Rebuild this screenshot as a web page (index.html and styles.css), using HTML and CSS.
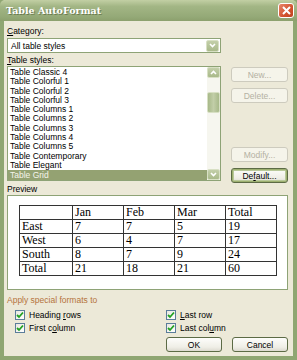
FILE: index.html
```html
<!DOCTYPE html>
<html lang="en">

<head>
    <meta charset="UTF-8">
    <title>Table AutoFormat</title>
    <link rel="stylesheet" href="styles.css">
</head>

<body>
    <div class="window">
        <div class="titlebar">
            <span class="title">Table AutoFormat</span>
            <span class="close">
                <svg width="11" height="11" viewBox="0 0 11 11"><path d="M2 2 L9 9 M9 2 L2 9" stroke="#fff" stroke-width="2"/></svg>
            </span>
        </div>

        <div class="client">
            <div class="label"><u>C</u>ategory:</div>
            <div class="combo">
                <span class="combo-text">All table styles</span>
                <span class="arrow-btn">
                    <svg width="7" height="5" viewBox="0 0 7 5"><path d="M1 1 L3.5 3.5 L6 1" stroke="#fff" stroke-width="1.6" fill="none"/></svg>
                </span>
            </div>

            <div class="label"><u>T</u>able styles:</div>
            <div class="styles-row">
                <div class="listbox">
                    <ul class="items">
                        <li>Table Classic 4</li>
                        <li>Table Colorful 1</li>
                        <li>Table Colorful 2</li>
                        <li>Table Colorful 3</li>
                        <li>Table Columns 1</li>
                        <li>Table Columns 2</li>
                        <li>Table Columns 3</li>
                        <li>Table Columns 4</li>
                        <li>Table Columns 5</li>
                        <li>Table Contemporary</li>
                        <li>Table Elegant</li>
                        <li class="selected">Table Grid</li>
                    </ul>
                    <div class="scrollbar">
                        <span class="arrow-btn small">
                            <svg width="7" height="5" viewBox="0 0 7 5"><path d="M1 4 L3.5 1.5 L6 4" stroke="#fff" stroke-width="1.6" fill="none"/></svg>
                        </span>
                        <div class="track">
                            <div class="thumb"></div>
                        </div>
                        <span class="arrow-btn small">
                            <svg width="7" height="5" viewBox="0 0 7 5"><path d="M1 1 L3.5 3.5 L6 1" stroke="#fff" stroke-width="1.6" fill="none"/></svg>
                        </span>
                    </div>
                </div>
                <div class="side-buttons">
                    <button class="btn disabled">New...</button>
                    <button class="btn disabled">Delete...</button>
                    <div class="spacer"></div>
                    <button class="btn disabled">Modify...</button>
                    <button class="btn default">De<u>f</u>ault...</button>
                </div>
            </div>

            <div class="label">Preview</div>
            <div class="preview">
                <table class="grid">
                    <tr><td></td><td>Jan</td><td>Feb</td><td>Mar</td><td>Total</td></tr>
                    <tr><td>East</td><td>7</td><td>7</td><td>5</td><td>19</td></tr>
                    <tr><td>West</td><td>6</td><td>4</td><td>7</td><td>17</td></tr>
                    <tr><td>South</td><td>8</td><td>7</td><td>9</td><td>24</td></tr>
                    <tr><td>Total</td><td>21</td><td>18</td><td>21</td><td>60</td></tr>
                </table>
            </div>

            <div class="group-label">Apply special formats to</div>
            <div class="checks">
                <label class="check"><span class="box"><svg width="8" height="8" viewBox="0 0 8 8"><path d="M1 4 L3 6 L7 1.5" stroke="#21a121" stroke-width="1.8" fill="none"/></svg></span><span>Heading <u>r</u>ows</span></label>
                <label class="check"><span class="box"><svg width="8" height="8" viewBox="0 0 8 8"><path d="M1 4 L3 6 L7 1.5" stroke="#21a121" stroke-width="1.8" fill="none"/></svg></span><span><u>L</u>ast row</span></label>
                <label class="check"><span class="box"><svg width="8" height="8" viewBox="0 0 8 8"><path d="M1 4 L3 6 L7 1.5" stroke="#21a121" stroke-width="1.8" fill="none"/></svg></span><span>First c<u>o</u>lumn</span></label>
                <label class="check"><span class="box"><svg width="8" height="8" viewBox="0 0 8 8"><path d="M1 4 L3 6 L7 1.5" stroke="#21a121" stroke-width="1.8" fill="none"/></svg></span><span>Last col<u>u</u>mn</span></label>
            </div>

            <div class="footer">
                <button class="btn">OK</button>
                <button class="btn">Cancel</button>
            </div>
        </div>
    </div>
</body>

</html>
```

FILE: styles.css
```css
body {
    margin: 0;
    font-family: "Liberation Sans", Arial, sans-serif;
    font-size: 8.5px;
    color: #000;
}

.window {
    width: 297px;
    height: 360px;
    box-sizing: border-box;
    background: #ece9d8;
    border: 4px solid #8fa672;
    border-top: none;
    display: flex;
    flex-direction: column;
}

.titlebar {
    height: 21px;
    margin: 0 -4px;
    padding: 0 3px 0 6px;
    background: linear-gradient(#c2cfa4, #a3b685 30%, #94a977 80%, #8ca06d);
    display: flex;
    align-items: center;
    justify-content: space-between;
    border-radius: 5px 5px 0 0;
}

.title {
    color: #fff;
    font-family: "DejaVu Serif", serif;
    font-weight: bold;
    font-size: 9.5px;
    text-shadow: 1px 1px 0 #6b7b50;
}

.close {
    width: 16px;
    height: 15px;
    box-sizing: border-box;
    border: 1px solid #fff;
    border-radius: 3px;
    background: linear-gradient(135deg, #e8866a, #d2532f 60%, #c0431f);
    display: flex;
    align-items: center;
    justify-content: center;
}

.client {
    padding: 4px 5px 0 3px;
    flex: 1;
}

.label {
    height: 12px;
    line-height: 12px;
}

.combo {
    width: 214px;
    height: 15px;
    box-sizing: border-box;
    border: 1px solid #8ea376;
    background: #fff;
    display: flex;
    align-items: center;
    justify-content: space-between;
    padding: 1px 1px 1px 3px;
    margin-top: 1px;
    margin-bottom: 1px;
}

.arrow-btn {
    width: 13px;
    height: 12px;
    box-sizing: border-box;
    background: linear-gradient(#c3cfa9, #a9b98a);
    border: 1px solid #d8e0c4;
    border-radius: 2px;
    display: flex;
    align-items: center;
    justify-content: center;
}

.styles-row {
    display: flex;
    gap: 9px;
    height: 117px;
}

.listbox {
    width: 214px;
    height: 115px;
    box-sizing: border-box;
    border: 1px solid #8ea376;
    background: #fff;
    display: flex;
}

.items {
    list-style: none;
    margin: 0;
    padding: 1px 0 0 0;
    flex: 1;
}

.items li {
    height: 9.3px;
    line-height: 9.3px;
    padding-left: 2px;
    white-space: nowrap;
}

.items li.selected {
    background: #94a272;
    color: #f4f4ea;
    height: 10px;
    line-height: 10px;
}

.scrollbar {
    width: 13px;
    display: flex;
    flex-direction: column;
    background: #f6f6ef;
}

.arrow-btn.small {
    height: 11px;
}

.track {
    flex: 1;
    padding-top: 14px;
}

.thumb {
    height: 21px;
    background: linear-gradient(90deg, #a8b98a, #c2cea8, #a8b98a);
    border: 1px solid #d8e0c4;
    border-radius: 2px;
    box-sizing: border-box;
}

.side-buttons {
    width: 58px;
    display: flex;
    flex-direction: column;
    padding-top: 1px;
    gap: 6px;
}

.spacer {
    flex: 1;
}

.btn {
    height: 15px;
    width: 57px;
    box-sizing: border-box;
    font-family: "Liberation Sans", Arial, sans-serif;
    font-size: 8.5px;
    padding: 0;
    border: 1px solid #5c6b45;
    border-radius: 3px;
    background: linear-gradient(#fdfdfb, #efeee6 70%, #dcdad0);
    color: #000;
}

.btn.disabled {
    border-color: #cdcbbe;
    background: #f5f4ea;
    color: #b4b1a2;
    margin-left: 1px;
}

.btn.default {
    margin-left: 1px;
    box-shadow: inset 0 0 0 1px #9db070, inset 0 0 0 2px #b9c99a;
}

.preview {
    height: 95px;
    box-sizing: border-box;
    border: 1px solid #8ea376;
    background: #fff;
    width: 281px;
    padding: 9px 0 0 11px;
}

.grid {
    border-collapse: collapse;
    font-family: "Liberation Serif", "Times New Roman", serif;
    font-size: 12px;
    color: #000;
}

.grid td {
    border: 1px solid #333;
    width: 51px;
    height: 13px;
    padding: 0 2px;
    line-height: 13px;
    box-sizing: border-box;
}

.grid td:first-child {
    width: 53px;
}

.group-label {
    color: #b5733c;
    height: 12px;
    line-height: 12px;
    margin-top: 4px;
}

.checks {
    display: grid;
    grid-template-columns: 151px auto;
    row-gap: 3px;
    padding-left: 8px;
    margin-top: 4px;
}

.check {
    display: flex;
    align-items: center;
    gap: 4px;
    height: 10px;
}

.box {
    width: 10px;
    height: 10px;
    box-sizing: border-box;
    border: 1px solid #5b7d9a;
    background: linear-gradient(135deg, #e8e8e0, #fff);
    display: flex;
    align-items: center;
    justify-content: center;
}

.footer {
    display: flex;
    justify-content: flex-end;
    gap: 10px;
    margin-top: 4px;
}

.footer .btn {
    width: 56px;
}
```
